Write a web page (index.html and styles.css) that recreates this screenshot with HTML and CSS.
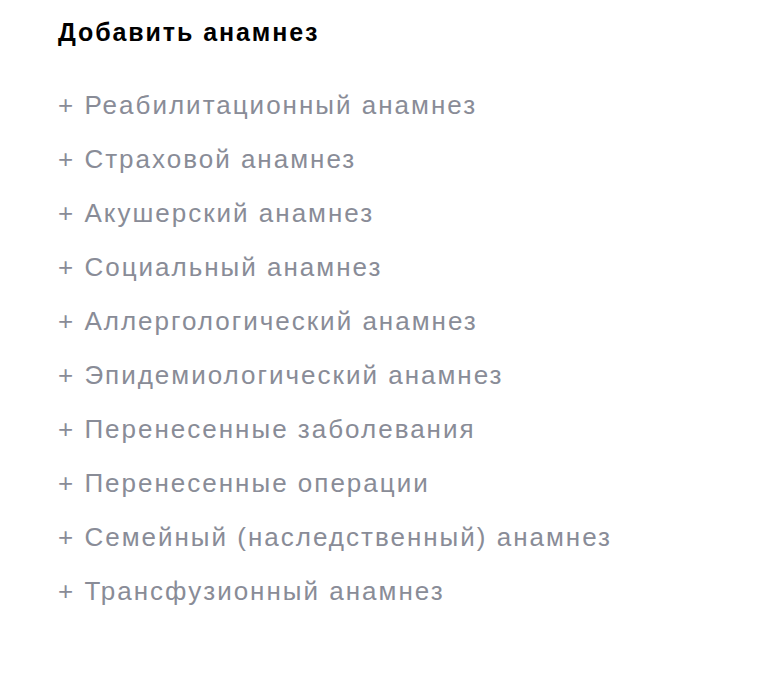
FILE: index.html
```html
<!DOCTYPE html>
<html lang="ru">
<head>
<meta charset="utf-8">
<link rel="stylesheet" href="styles.css">
</head>
<body>
<div class="panel">
  <h2 class="title">Добавить анамнез</h2>
  <ul class="list">
    <li class="item">+ Реабилитационный анамнез</li>
    <li class="item">+ Страховой анамнез</li>
    <li class="item">+ Акушерский анамнез</li>
    <li class="item">+ Социальный анамнез</li>
    <li class="item">+ Аллергологический анамнез</li>
    <li class="item">+ Эпидемиологический анамнез</li>
    <li class="item">+ Перенесенные заболевания</li>
    <li class="item">+ Перенесенные операции</li>
    <li class="item">+ Семейный (наследственный) анамнез</li>
    <li class="item">+ Трансфузионный анамнез</li>
  </ul>
</div>
</body>
</html>
```
FILE: styles.css
```css
html, body {
  margin: 0;
  padding: 0;
  background: #ffffff;
}
body {
  font-family: "Liberation Sans", Arial, sans-serif;
}
.panel {
  padding: 16px 58px;
}
.title {
  margin: 0;
  font-size: 25px;
  line-height: 32px;
  font-weight: 700;
  letter-spacing: 1.9px;
  color: #000000;
}
.list {
  list-style: none;
  margin: 41px 0 0 0;
  padding: 0;
  display: flex;
  flex-direction: column;
  gap: 22px;
}
.item {
  font-size: 26px;
  line-height: 32px;
  letter-spacing: 2px;
  color: #898c97;
  cursor: pointer;
}
```
